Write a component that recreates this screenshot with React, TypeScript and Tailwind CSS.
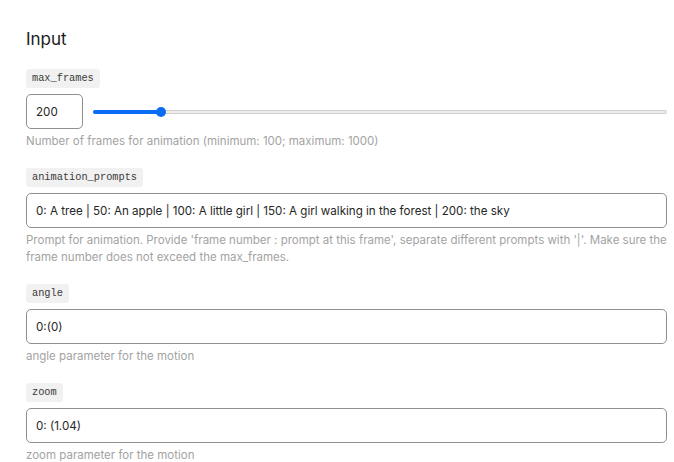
import React, { useState } from 'react';

const font = { fontFamily: 'Inter, "Noto Sans", sans-serif' };

const Chip = ({ children }: { children: React.ReactNode }) => (
  <div className="flex h-[19px] w-fit items-center rounded-[3px] bg-[#f1f1f1] px-[6px] font-['Liberation_Mono',monospace] text-[10.3px] leading-none text-[#3a3a3a]">
    {children}
  </div>
);

const Help = ({ children }: { children: React.ReactNode }) => (
  <p className="mt-[4px] text-[11.5px] leading-[17px] text-[#a3a3a3]">{children}</p>
);

const TextField = ({ value, onChange }: { value: string; onChange: (v: string) => void }) => (
  <input
    type="text"
    value={value}
    onChange={(e) => onChange(e.target.value)}
    className="mt-[6px] block h-[35px] w-full rounded-[5px] border border-[#8f8f8f] px-[9px] text-[11.6px] text-[#262626] outline-none"
  />
);

const App = () => {
  const [frames, setFrames] = useState(200);
  const [prompts, setPrompts] = useState(
    '0: A tree | 50: An apple | 100: A little girl | 150: A girl walking in the forest | 200: the sky'
  );
  const [angle, setAngle] = useState('0:(0)');
  const [zoom, setZoom] = useState('0: (1.04)');

  const frac = (frames - 100) / 900;

  return (
    <div className="min-h-[462px] bg-white pl-[26px] pr-[7px] pt-[28px]" style={font}>
      <h2 className="text-[17px] leading-[22px] text-[#1a1a1a]">Input</h2>

      {/* max_frames */}
      <div className="mt-[19px]">
        <Chip>max_frames</Chip>
        <div className="mt-[6px] flex items-center gap-[10px]">
          <input
            type="number"
            value={frames}
            onChange={(e) => setFrames(Number(e.target.value))}
            className="h-[35px] w-[57px] rounded-[5px] border border-[#8f8f8f] px-[9px] text-[11.6px] text-[#262626] outline-none [appearance:textfield] [&::-webkit-inner-spin-button]:appearance-none"
          />
          <div className="relative h-[10px] flex-1">
            <div className="absolute left-0 right-0 top-[3px] h-[4px] rounded-full border border-[#d0d0d0] bg-[#ececec]" />
            <div
              className="absolute left-0 top-[3px] h-[4px] rounded-full bg-[#0a6cf5]"
              style={{ width: `calc(5px + ${frac} * (100% - 10px))` }}
            />
            <div
              className="absolute top-0 h-[10px] w-[10px] -translate-x-1/2 rounded-full bg-[#0a6cf5]"
              style={{ left: `calc(5px + ${frac} * (100% - 10px))` }}
            />
          </div>
        </div>
        <Help>Number of frames for animation (minimum: 100; maximum: 1000)</Help>
      </div>

      {/* animation_prompts */}
      <div className="mt-[18px]">
        <Chip>animation_prompts</Chip>
        <TextField value={prompts} onChange={setPrompts} />
        <Help>
          Prompt for animation. Provide 'frame number : prompt at this frame', separate different prompts with '|'. Make sure the frame number does not exceed the max_frames.
        </Help>
      </div>

      {/* angle */}
      <div className="mt-[18px]">
        <Chip>angle</Chip>
        <TextField value={angle} onChange={setAngle} />
        <Help>angle parameter for the motion</Help>
      </div>

      {/* zoom */}
      <div className="mt-[18px]">
        <Chip>zoom</Chip>
        <TextField value={zoom} onChange={setZoom} />
        <Help>zoom parameter for the motion</Help>
      </div>
    </div>
  );
};

export default App;
